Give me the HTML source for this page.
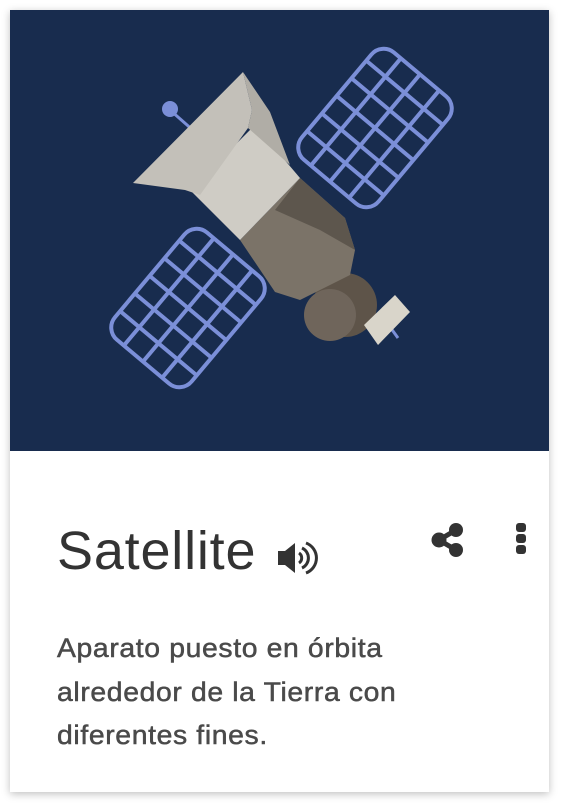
<!DOCTYPE html>
<html><head><meta charset="utf-8"><style>
html,body{margin:0;padding:0;background:#fff;width:564px;height:808px;overflow:hidden}
.card{position:absolute;left:10px;top:10px;width:539px;height:782px;background:#fff;box-shadow:0 2px 8px rgba(0,0,0,.25)}
.img{position:absolute;left:0;top:0;width:539px;height:441px;background:#182c4e}
.title{position:absolute;left:47px;top:511px;font:54px "Liberation Sans",sans-serif;color:#333;line-height:60px;letter-spacing:0.8px}
.desc{position:absolute;left:47px;top:617px;font:27px "Liberation Sans",sans-serif;color:#4a4a4a;line-height:43.5px;white-space:nowrap;letter-spacing:0.6px;transform:scaleX(1.05);transform-origin:0 0;-webkit-text-stroke:0.5px #4a4a4a}
</style></head><body>
<div class="card">
<div class="img">
<svg width="539" height="441" viewBox="10 10 539 441">
 <g fill="none" stroke="#7b8fd8" stroke-width="4">
  <g transform="translate(375,128) rotate(-50)">
   <rect x="-70" y="-50" width="140" height="100" rx="16"/>
   <path d="M-46-50V50M-23-50V50M0-50V50M23-50V50M46-50V50M-70-25H70M-70 0H70M-70 25H70"/>
  </g>
  <g transform="translate(188,308) rotate(-50)">
   <rect x="-70" y="-50" width="140" height="100" rx="16"/>
   <path d="M-46-50V50M-23-50V50M0-50V50M23-50V50M46-50V50M-70-25H70M-70 0H70M-70 25H70"/>
  </g>
 </g>
 <line x1="170" y1="110" x2="195" y2="132" stroke="#7b8fd8" stroke-width="3"/>
 <circle cx="170" cy="109" r="8" fill="#7b8fd8"/>
 <line x1="385" y1="320" x2="398" y2="338" stroke="#7b8fd8" stroke-width="3"/>
 <circle cx="345" cy="305" r="32" fill="#5e5449"/>
 <circle cx="330" cy="315" r="26" fill="#6f655b"/>
 <polygon points="364,325 395,295 410,312 378,345" fill="#d9d5ca"/>
 <polygon points="240,240 300,178 345,218 355,250 350,275 300,300 275,292" fill="#7b7368"/>
 <polygon points="275,210 300,178 345,218 355,250 320,230" fill="#5d564d"/>
 <polygon points="190,190 255,125 300,178 240,240" fill="#cfccc5"/>
 <polygon points="133,183 243,72 252,110 248,128 200,195 185,190" fill="#c3c0b9"/>
 <polygon points="243,72 252,110 248,128 290,165 270,112" fill="#b0ada6"/>
</svg>
</div>
<div class="title">Satellite</div>
<svg style="position:absolute;left:266px;top:530px" width="42" height="36" viewBox="0 0 42 36">
 <path d="M2 11h7l10-8v30l-10-8H2z" fill="#333"/>
 <path d="M23 13a6 6 0 0 1 0 10" stroke="#333" stroke-width="3" fill="none"/>
 <path d="M26 8a11 11 0 0 1 0 20" stroke="#333" stroke-width="3" fill="none"/>
 <path d="M30 3a16 16 0 0 1 0 30" stroke="#333" stroke-width="3" fill="none"/>
</svg>
<svg style="position:absolute;left:418px;top:510px" width="40" height="40" viewBox="0 0 40 40">
 <circle cx="28" cy="10" r="7" fill="#333"/><circle cx="28" cy="30" r="7" fill="#333"/><circle cx="11" cy="20" r="7.5" fill="#333"/>
 <path d="M28 10L11 20L28 30" stroke="#333" stroke-width="5" fill="none"/>
</svg>
<svg style="position:absolute;left:504px;top:512px" width="14" height="34" viewBox="0 0 14 34">
 <rect x="2" y="1" width="10" height="9" rx="3" fill="#333"/><rect x="2" y="12" width="10" height="9" rx="3" fill="#333"/><rect x="2" y="23" width="10" height="9" rx="3" fill="#333"/>
</svg>
<div class="desc">Aparato puesto en órbita<br>alrededor de la Tierra con<br>diferentes fines.</div>
</div>
</body></html>
